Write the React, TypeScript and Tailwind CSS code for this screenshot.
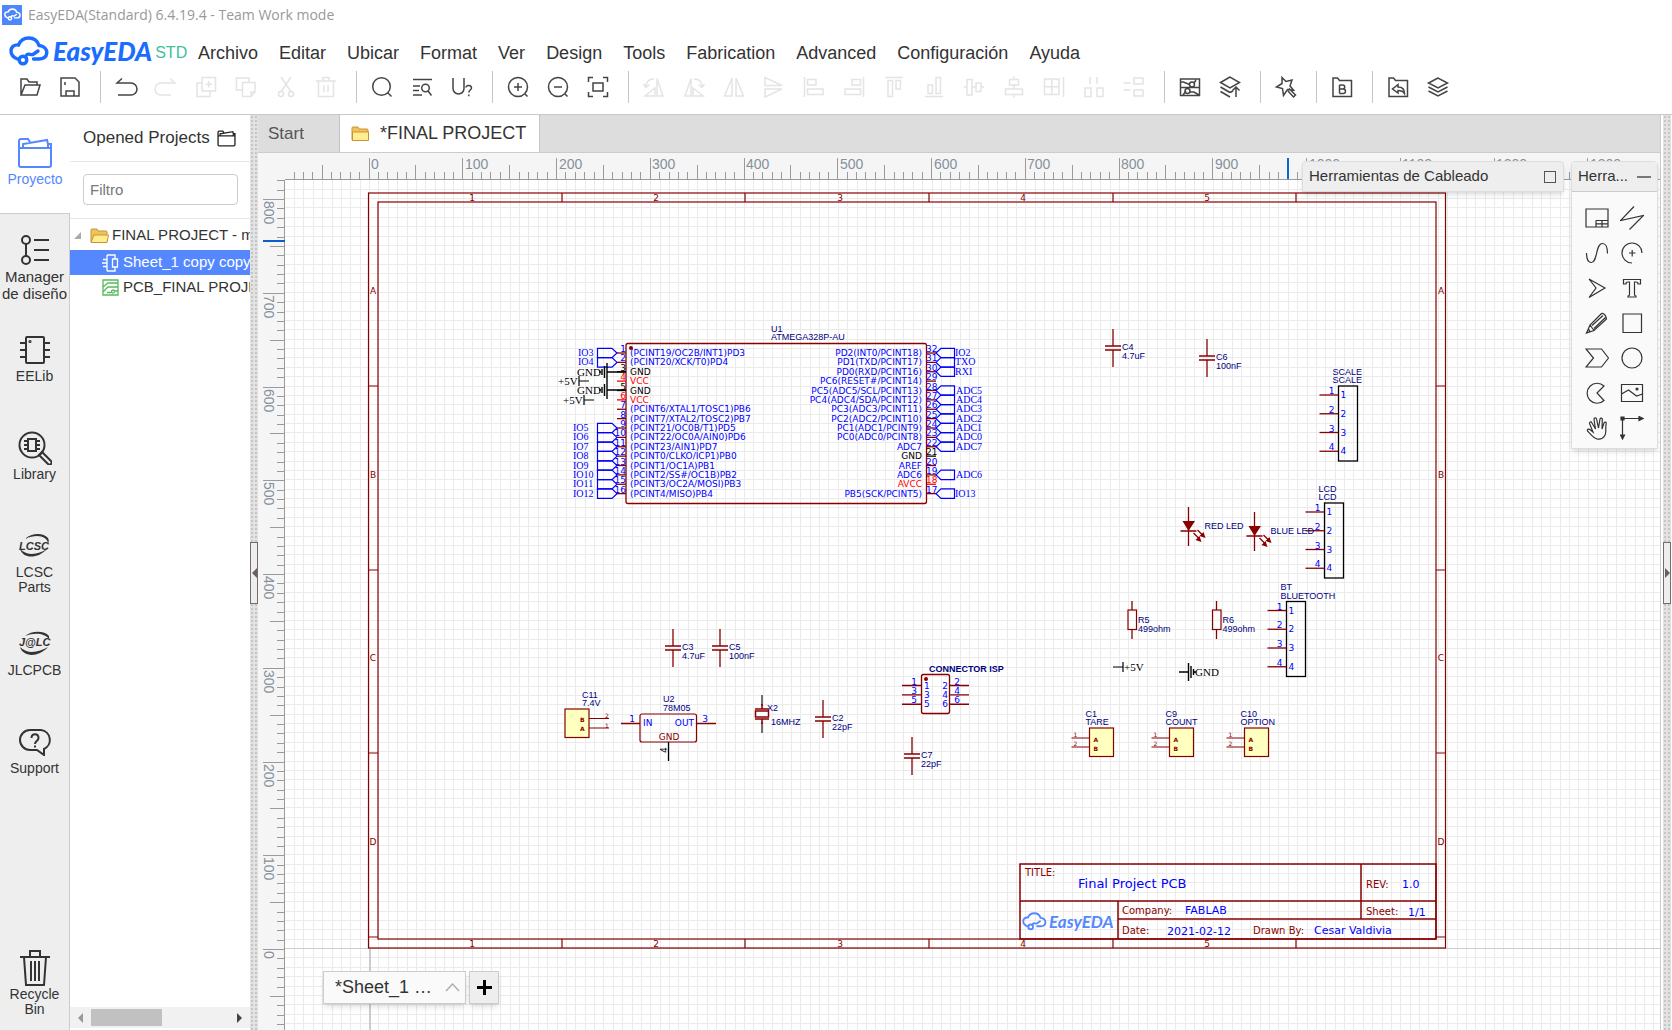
import { ReactNode } from 'react';

const MENUS = ['Archivo', 'Editar', 'Ubicar', 'Format', 'Ver', 'Design', 'Tools', 'Fabrication', 'Advanced', 'Configuración', 'Ayuda'];

const RED = '#880000';
const BLUE = '#0000ff';
const NAVY = '#000080';

// distance between two small grid lines, in pixels
const STEP = 9.375;

function Icon({ size = 24, width = 1.5, children }: { size?: number; width?: number; children: ReactNode }) {
  return (
    <svg
      width={size}
      height={size}
      viewBox="0 0 24 24"
      fill="none"
      stroke="currentColor"
      strokeWidth={width}
      className="shrink-0"
      aria-hidden="true"
    >
      {children}
    </svg>
  );
}

function Cloud({ className }: { className: string }) {
  return (
    <svg viewBox="0 0 40 30" fill="none" stroke="currentColor" strokeWidth="3.4" strokeLinecap="round" className={className} aria-hidden="true">
      <path d="M8.5 23C4.500 21.500 2 18.500 2 15C2 10.500 5.500 8.500 9.500 9C11.500 4 16 2 20 2C25 2 28.500 5 30 9.500C35 10 38 13 37.800 17C37.500 21 34 23 30 23H24.500" />
      <circle cx="14" cy="24" r="3.800" />
      <path d="M16.500 21C18.500 15.500 21 19.500 24 18.500L29 15" />
    </svg>
  );
}

type Tool = { label: string; off?: boolean; icon: ReactNode } | null;

const TOOLS: Tool[] = [
  { label: 'Open', icon: <path d="M3 20V4h6l2 3h8v3M3 20l4-10h15l-3 10z" /> },
  { label: 'Save', icon: <path d="M3 3h14l4 4v14H3zM7 7v3M8 21v-5h8v5" /> },
  null,
  { label: 'Undo', icon: <path d="M8 3.500L3 8h14a6 6 0 0 1 0 12H4" /> },
  { label: 'Redo', off: true, icon: <path d="M16 3.500L21 8H7a6 6 0 0 0 0 12h10" /> },
  { label: 'Add', off: true, icon: <path d="M8 2.500h13.500V16H8zM14.800 6v6.500M11.500 9.200H18M8 8H3v13.500h13V16" /> },
  { label: 'Copy', off: true, icon: <path d="M8 15H2.500V3H15v4M8.500 7.500H21V17l-4 4.500H8.500zM21 17h-4v4.500" /> },
  {
    label: 'Cut',
    off: true,
    icon: (
      <>
        <path d="M7 2l9.500 14M17 2L7.500 16" />
        <circle cx="7" cy="19" r="2.500" />
        <circle cx="17" cy="19" r="2.500" />
      </>
    ),
  },
  { label: 'Delete', off: true, icon: <path d="M2 6h20M9 6V2.500h6V6M4.500 6v15.500h15V6M10 10v7M14 10v7" /> },
  null,
  {
    label: 'Search',
    icon: (
      <>
        <circle cx="11.500" cy="11.500" r="8.800" />
        <path d="M17.500 17.500l4 4" />
      </>
    ),
  },
  {
    label: 'Find component',
    icon: (
      <>
        <path d="M3 4.500h19M3 11h7M3 15.500h6M3 20h9" />
        <circle cx="15.500" cy="13" r="3.800" />
        <path d="M18 16l3.500 4.500" />
      </>
    ),
  },
  {
    label: 'Annotate',
    icon: (
      <>
        <path d="M3 3v10.500a5.500 5.500 0 0 0 11 0V3" />
        <path d="M16 12.500c.500-3 5.500-2.500 5.500.500c0 2-2.700 2-2.700 4.500M18.800 19.500v1.800" />
      </>
    ),
  },
  null,
  {
    label: 'Zoom in',
    icon: (
      <>
        <circle cx="12" cy="12" r="9.500" />
        <path d="M12 8v8M8 12h8M19 19l2.500 2.500" />
      </>
    ),
  },
  {
    label: 'Zoom out',
    icon: (
      <>
        <circle cx="12" cy="12" r="9.500" />
        <path d="M8 12h8M19 19l2.500 2.500" />
      </>
    ),
  },
  { label: 'Fit window', icon: <path d="M2.500 7V2.500H7M17 2.500h4.500V7M21.500 17v4.500H17M7 21.500H2.500V17M7 8h10v8H7z" /> },
  null,
  { label: 'Rotate left', off: true, icon: <path d="M15 3.500V21h6zM13 13v8H3zM4 12C4 7 7 4 12 4M1.500 9L4 12.500L7.500 9.500" /> },
  { label: 'Rotate right', off: true, icon: <path d="M9 3.500V21H3zM11 13v8h10zM20 12C20 7 17 4 12 4M22.500 9L20 12.500L16.500 9.500" /> },
  { label: 'Flip horizontal', off: true, icon: <path d="M10 3v18H2.500zM14 3v18h7.500z" /> },
  { label: 'Flip vertical', off: true, icon: <path d="M3 10.500V2.500l17 8zM3 14v8l17-8z" /> },
  { label: 'Align left', off: true, icon: <path d="M2.500 2v20M5.500 4.500H14V10H5.500zM5.500 14H21v5.500H5.500z" /> },
  { label: 'Align right', off: true, icon: <path d="M21.500 2v20M10 4.500h8.500V10H10zM3 14h15.500v5.500H3z" /> },
  { label: 'Align top', off: true, icon: <path d="M3 2.500h18M6 5.500h4.500V21.500H6zM14 5.500h4.500V14H14z" /> },
  { label: 'Align bottom', off: true, icon: <path d="M3 21.500h18M6 10h4.500v8.500H6zM14 2.500h4.500v16H14z" /> },
  { label: 'Align middle', off: true, icon: <path d="M2 12h3M10 12h4M19 12h3M5 4.500h5v15.500H5zM14 8h5v8.500h-5z" /> },
  { label: 'Align center', off: true, icon: <path d="M12 1.500v3M12 10v4M12 19.500v3M7.500 4.500h9V10h-9zM3.500 14h17v5.500h-17z" /> },
  { label: 'Align grid', off: true, icon: <path d="M2.500 4h14.500v15.500H2.500zM9.800 4v15.500M2.500 11.800H17M21.500 2v20" /> },
  { label: 'Distribute horizontally', off: true, icon: <path d="M8 2v7M15 2v7M3 13h6v8.500H3zM15 13h6v8.500h-6z" /> },
  { label: 'Distribute vertically', off: true, icon: <path d="M1.500 8h7M1.500 15h7M12 3h9v6h-9zM12 15h9v6h-9z" /> },
  null,
  {
    label: 'Design manager',
    icon: (
      <>
        <path d="M2.500 4h19v16.500h-19zM2.500 7h3l6 2.500M16 8l2-3M8 16l-3 4M2.500 12.500h19M12 17h4l5 3" />
        <circle cx="14" cy="9.500" r="2.500" />
        <circle cx="9.500" cy="16" r="2.500" />
      </>
    ),
  },
  { label: 'Convert to PCB', icon: <path d="M12 2L2.500 7.500L12 13l9.500-5.500zM2.500 12l9.500 5.500M2.500 16.500l9.500 5.500M18 22V12.500M14.500 15.500l3.500-3.500l3.500 3.500M12 17.500l3-1.500" /> },
  null,
  { label: 'Wizard', icon: <path d="M8 2.500l4 4l6-1.500l-2 6l3.500 4l-6-.500l-4 6l-1-7l-6-1.500l5.500-3.500zM15 13.500l6.500 6.500l-2 2l-5.500-6" /> },
  null,
  { label: 'BOM', icon: <path d="M3 21.500V3h4.500l2 2.500h12v16zM9.500 10v8.500M9.500 10h3.200a2 2 0 0 1 0 4H9.500h3.700a2.200 2.200 0 0 1 0 4.500H9.500" /> },
  null,
  { label: 'Import', icon: <path d="M3 21.500V3h4.500l2 2.500h12v16zM12 9.500L6.500 14l5.500 4v-2.500c3 0 5 .500 6.500 3c0-4-2.500-6.500-6.500-6.500z" /> },
  { label: 'Layers', icon: <path d="M12 3L2.500 8L12 13l9.500-5zM2.500 12l9.500 5l9.500-5M2.500 16l9.500 5l9.500-5" /> },
];

function Header() {
  return (
    <header className="shrink-0 border-b border-[#c8c8c8] bg-white">
      <div className="flex h-[29px] items-center gap-[6px] pl-[2px]">
        <div className="flex h-5 w-5 items-center justify-center bg-[#4f86fb] text-white">
          <Cloud className="h-[13px] w-[17px]" />
        </div>
        <span className="font-['Open_Sans',sans-serif] text-[14px] text-[#999]">EasyEDA(Standard) 6.4.19.4 - Team Work mode</span>
      </div>
      <div className="flex h-[41px] items-center pt-[7px]">
        <a href="#home" className="flex w-[198px] shrink-0 items-center pl-[9px] text-[#1a6dff]">
          <Cloud className="mb-1 h-[30px] w-10" />
          <span className="mb-1 ml-1 font-['Lato',sans-serif] text-[26px] leading-7 font-black italic">EasyEDA</span>
          <span className="ml-[3px] text-[16px] text-[#3cc29b]">STD</span>
        </a>
        <nav className="flex gap-[21px] text-[18px] text-[#333]">
          {MENUS.map((m) => (
            <button key={m} type="button">
              {m}
            </button>
          ))}
        </nav>
      </div>
      <div className="mb-[10px] flex h-[34px] items-center pl-[10px]">
        {TOOLS.map((t, i) =>
          t ? (
            <button
              key={t.label}
              type="button"
              aria-label={t.label}
              disabled={t.off}
              className="flex w-10 shrink-0 justify-center text-[#444] disabled:text-[#e4e4e4]"
            >
              <Icon>{t.icon}</Icon>
            </button>
          ) : (
            <div key={i} className="flex w-4 shrink-0 justify-center self-stretch py-px pl-1">
              <div className="w-px bg-[#c4c4c4]" />
            </div>
          ),
        )}
      </div>
    </header>
  );
}

function RailItem({ label, icon, active, big }: { label: string; icon: ReactNode; active?: boolean; big?: boolean }) {
  return (
    <button
      type="button"
      className={`flex h-[98px] w-full shrink-0 flex-col items-center ${active ? 'bg-white text-[#5588ff]' : 'border-r border-[#ccc] text-[#333]'}`}
    >
      <span className={`flex h-9 items-center ${big ? 'mt-[18px]' : 'mt-5'}`}>{icon}</span>
      <span className={`w-[66px] ${big ? 'text-[15px] leading-[17px]' : 'mt-px text-[14px] leading-[15px]'}`}>{label}</span>
    </button>
  );
}

function Rail() {
  return (
    <aside className="flex w-[70px] shrink-0 flex-col bg-[#eee]">
      <RailItem
        active
        label="Proyecto"
        icon={
          <svg width="36" height="32" viewBox="0 0 36 32" fill="none" stroke="currentColor" strokeWidth="2" aria-hidden="true">
            <path d="M2 11v17a2 2 0 0 0 2 2h28a2 2 0 0 0 2-2V11zM2 11V4a2 2 0 0 1 2-2h7l2 3M6 11V7l24-4l1 4v4M31 7h3v4" />
          </svg>
        }
      />
      <div className="border-t border-r border-[#ccc]" />
      <RailItem
        big
        label="Manager de diseño"
        icon={
          <svg width="30" height="32" viewBox="0 0 30 32" fill="none" stroke="currentColor" strokeWidth="2" aria-hidden="true">
            <circle cx="6" cy="6" r="4" />
            <circle cx="6" cy="26" r="4" />
            <path d="M6 10v12M14 6h15M14 16h15M14 26h15" />
          </svg>
        }
      />
      <RailItem
        label="EELib"
        icon={
          <svg width="32" height="30" viewBox="0 0 32 30" fill="none" stroke="currentColor" strokeWidth="2" aria-hidden="true">
            <rect x="7" y="2" width="18" height="26" rx="1" />
            <path d="M1 8h6M1 15h6M1 22h6M25 8h6M25 15h6M25 22h6" />
            <circle cx="11" cy="6.500" r=".6" />
          </svg>
        }
      />
      <RailItem
        label="Library"
        icon={
          <svg width="34" height="34" viewBox="0 0 34 34" fill="none" stroke="currentColor" strokeWidth="2" aria-hidden="true">
            <circle cx="14" cy="14" r="12.500" />
            <path d="M10 8h8v12h-8zM6 10h4M6 14h4M6 18h4M18 10h4M18 14h4M18 18h4" />
            <path d="M21 24l3-3l9 9a2 2 0 0 1-3 3z" />
          </svg>
        }
      />
      <RailItem
        label="LCSC Parts"
        icon={
          <svg width="34" height="26" viewBox="0 0 34 26" fill="currentColor" aria-hidden="true">
            <path d="M7 6C13 0 25-1 30 5C31 7 31 9 30 10C29 4 20 0 7 6z" />
            <path d="M2 16C5 26 20 26 29 16C21 21 10 24 2 16z" />
            <text x="1" y="17" fontSize="11" fontStyle="italic" fontWeight="bold">LCSC</text>
          </svg>
        }
      />
      <RailItem
        label="JLCPCB"
        icon={
          <svg width="34" height="26" viewBox="0 0 34 26" fill="currentColor" aria-hidden="true">
            <path d="M7 5C13 0 26-1 31 5C31 6 31 7 31 8C27 3 18 1 7 5z" />
            <path d="M2 16C5 26 20 27 30 16C21 21 10 24 2 16z" />
            <text x="1" y="15" fontSize="11" fontStyle="italic" fontWeight="bold">J@LC</text>
          </svg>
        }
      />
      <RailItem
        label="Support"
        icon={
          <svg width="34" height="28" viewBox="0 0 34 28" fill="none" stroke="currentColor" strokeWidth="2" aria-hidden="true">
            <path d="M12 2h11a10 10 0 0 1 3 19v6l-7-5h-7a10 10 0 0 1 0-20z" />
            <path d="M13.500 10c0-5 7-5 7 0c0 3-3.500 3-3.500 6M17 17.500v2" />
          </svg>
        }
      />
      <div className="flex-1 border-r border-[#ccc]" />
      <button type="button" className="flex shrink-0 flex-col items-center border-r border-[#ccc] pb-[13px] text-[14px] leading-[15px] text-[#333]">
        <svg width="32" height="36" viewBox="0 0 32 36" fill="none" stroke="currentColor" strokeWidth="2" aria-hidden="true">
          <path d="M1 7h30M11 7V1h10v6M5 7l2 28h18l2-28M12 11v20M16 11v20M20 11v20" />
        </svg>
        <span className="mt-px w-[60px]">Recycle Bin</span>
      </button>
    </aside>
  );
}

function Folder({ open }: { open?: boolean }) {
  return (
    <svg width="19" height="17" viewBox="0 0 19 17" stroke="#c8913a" className="shrink-0" aria-hidden="true">
      <path d="M1 15V3q0-1 1-1h5l1 2h8q1 0 1 1v10z" fill="#f0c35a" />
      <path d={open ? 'M1 15.500L4 8h14.500L17 15.500z' : 'M1.500 7h16v8.500h-16z'} fill="#ffee90" />
    </svg>
  );
}

function ProjectPanel() {
  return (
    <section className="flex w-[180px] shrink-0 flex-col overflow-hidden bg-white text-[#333]">
      <div className="flex h-[47px] shrink-0 items-center gap-[7px] border-b border-[#e8e8e8] pl-[13px]">
        <h2 className="text-[17px] whitespace-nowrap">Opened Projects</h2>
        <svg width="19" height="17" viewBox="0 0 36 32" fill="none" stroke="#222" strokeWidth="2.500" aria-hidden="true">
          <path d="M2 11v17a2 2 0 0 0 2 2h28a2 2 0 0 0 2-2V11zM2 11V4a2 2 0 0 1 2-2h7l2 3M6 11V7l24-4l1 4v4M31 7h3v4" />
        </svg>
      </div>
      <div className="h-[57px] shrink-0 border-b border-[#e8e8e8] px-[13px] pt-3">
        <input
          type="text"
          aria-label="Filtro"
          placeholder="Filtro"
          className="h-[31px] w-[155px] rounded border border-[#ccc] px-[6px] text-[15px] placeholder:text-[#777]"
        />
      </div>
      <ul className="flex-1 overflow-hidden pt-1 text-[15px] whitespace-nowrap">
        <li>
          <button type="button" className="mb-[2px] flex h-[25px] items-center pl-[4px]">
            <svg width="8" height="8" viewBox="0 0 8 8" fill="#aaa" aria-hidden="true">
              <path d="M7 0v7H0z" />
            </svg>
            <span className="ml-2">
              <Folder open />
            </span>
            <span className="ml-[3px]">FINAL PROJECT - master</span>
          </button>
          <ul>
            <li className="bg-[#5588ff] text-white">
              <button type="button" className="flex h-[25px] items-center gap-1 pl-8">
                <svg width="17" height="18" viewBox="0 0 17 18" fill="none" stroke="currentColor" strokeWidth="1.300" aria-hidden="true">
                  <path d="M1 5.500h4M1 12.500h4M5 9H0M5 1v16M5 1h8v4M5 17h8v-4M10.500 5h5v8h-5z" />
                </svg>
                Sheet_1 copy copy
              </button>
            </li>
            <li>
              <button type="button" className="flex h-[25px] items-center gap-1 pl-8">
                <svg width="17" height="17" viewBox="0 0 17 17" fill="none" stroke="#55bb5a" strokeWidth="1.300" aria-hidden="true">
                  <path d="M1 1h15v15H1zM1 8L6 4h10M1 13l5-5h10M5 13.500h4.500M12.500 12H16" />
                  <circle cx="11" cy="12.500" r="1.500" />
                </svg>
                PCB_FINAL PROJECT
              </button>
            </li>
          </ul>
        </li>
      </ul>
      <div className="mb-[2px] flex h-[21px] shrink-0 items-center bg-[#f1f1f1]">
        <svg width="21" height="10" viewBox="0 0 21 10" fill="#999" aria-hidden="true">
          <path d="M8 5l5-5v10z" />
        </svg>
        <div className="h-[17px] w-[71px] bg-[#c1c1c1]" />
        <svg width="10" height="10" viewBox="0 0 10 10" fill="#444" className="mr-[6px] ml-auto" aria-hidden="true">
          <path d="M8 5L3 0v10z" />
        </svg>
      </div>
    </section>
  );
}

function Splitter({ right }: { right?: boolean }) {
  return (
    <div className="flex w-2 shrink-0 flex-col bg-[#e2e2e2] bg-[radial-gradient(#c6c6c6_1px,transparent_1px)] bg-size-[4px_4px] pt-[427px]">
      <button
        type="button"
        aria-label={right ? 'Show right panel' : 'Hide left panel'}
        className="flex h-[62px] w-2 items-center justify-center border border-[#756b6b] bg-[#eee]"
      >
        <svg width="5" height="10" viewBox="0 0 5 10" fill="#6b6060" aria-hidden="true">
          <path d={right ? 'M0 0l5 5l-5 5z' : 'M5 0L0 5l5 5z'} />
        </svg>
      </button>
    </div>
  );
}

function range(from: number, to: number) {
  return Array.from({ length: to - from + 1 }, (_, i) => from + i);
}

function tickLength(k: number) {
  if (k % 10 === 0) return 21;
  return k % 5 === 0 ? 14 : 7;
}

function TopRuler() {
  return (
    <svg className="block h-[27px] w-full shrink-0 bg-[#f5f5f5]" aria-hidden="true">
      <g stroke="#9a9a9a" shapeRendering="crispEdges">
        <path d="M27 26.500H4000" />
        {range(-8, 300).map((k) => {
          const x = Math.round(110.5 + k * STEP) + 0.5;
          return <path key={k} d={`M${x} 26V${26 - tickLength(k)}`} />;
        })}
        <path d="M1030 5V26" stroke="#0a68cc" strokeWidth="2" />
      </g>
      <g fill="#86909c" fontSize="14">
        {range(0, 20).map((n) => (
          <text key={n} x={Math.round(113 + n * STEP * 10)} y="16">
            {n * 100}
          </text>
        ))}
      </g>
    </svg>
  );
}

function SideRuler() {
  return (
    <svg className="block h-full w-[27px] shrink-0 bg-[#f5f5f5]" aria-hidden="true">
      <g stroke="#9a9a9a" shapeRendering="crispEdges">
        <path d="M26.500 0V3000" />
        {range(-80, 82).map((k) => {
          const y = Math.round(769 - k * STEP) + 0.5;
          return <path key={k} d={`M26 ${y}H${26 - tickLength(k)}`} />;
        })}
        <path d="M5 61H27" stroke="#0a5fcc" strokeWidth="2" />
      </g>
      <g fill="#86909c" fontSize="14">
        {range(0, 8).map((n) => (
          <text key={n} transform={`translate(6 ${Math.round(771 - n * STEP * 10)}) rotate(90)`}>
            {n * 100}
          </text>
        ))}
      </g>
    </svg>
  );
}

function Grid() {
  const cols = range(-8, 300).map((k) => `M${Math.round(84 + k * STEP) + 0.5} 0V3000`);
  const rows = range(-200, 81).map((k) => `M0 ${Math.round(768 - k * STEP) + 0.5}H4000`);
  return (
    <g shapeRendering="crispEdges">
      <path d={cols.concat(rows).join('')} stroke="#ebebeb" />
      <path d="M0 768.500H4000" stroke="#ccc" />
      <path d="M84.500 768V3000" stroke="#ccc" strokeWidth="2" />
    </g>
  );
}

const SANS = 'Liberation Sans, Arial, sans-serif';
const WIDE = 'DejaVu Sans, Verdana, sans-serif';
const SERIF = 'Liberation Serif, serif';

type LabelProps = {
  x: number;
  y: number;
  size?: number;
  fill?: string;
  font?: string;
  anchor?: 'start' | 'middle' | 'end';
  bold?: boolean;
  children: ReactNode;
};

function Label({ x, y, size = 9, fill = NAVY, font = SANS, anchor = 'start', bold, children }: LabelProps) {
  return (
    <text x={x} y={y} fontSize={size} fill={fill} fontFamily={font} textAnchor={anchor} fontWeight={bold ? 700 : 400}>
      {children}
    </text>
  );
}

function Frame() {
  const cols = [562, 745, 929, 1113, 1296];
  const rows = [386, 570, 753, 937];
  return (
    <g>
      <g fill="none" stroke={RED} strokeWidth="1.200">
        <rect x="368.500" y="193" width="1077" height="755" />
        <rect x="378" y="202" width="1058" height="737" />
        {cols.map((x) => (
          <path key={x} d={`M${x} 193v9M${x} 939v9`} />
        ))}
        {rows.map((y) => (
          <path key={y} d={`M369 ${y}h9M1436 ${y}h9`} />
        ))}
      </g>
      {[472, 656, 840, 1023, 1207].map((x, i) => (
        <g key={x}>
          <Label x={x} y={201} font={WIDE} fill={RED} anchor="middle">{i + 1}</Label>
          <Label x={x} y={947} font={WIDE} fill={RED} anchor="middle">{i + 1}</Label>
        </g>
      ))}
      {[294, 478, 661, 845].map((y, i) => (
        <g key={y}>
          <Label x={373} y={y} font={WIDE} fill={RED} anchor="middle">{'ABCD'[i]}</Label>
          <Label x={1441} y={y} font={WIDE} fill={RED} anchor="middle">{'ABCD'[i]}</Label>
        </g>
      ))}
    </g>
  );
}

function TitleBlock() {
  return (
    <g>
      <path
        d="M1020 864H1436V939H1020zM1020 901H1436M1118 901V939M1118 919H1436M1361 864V919"
        fill="none"
        stroke={RED}
        strokeWidth="1.500"
      />
      <Label x={1025} y={876} size={10} font={WIDE} fill={RED}>TITLE:</Label>
      <Label x={1078} y={888} size={13} font={WIDE} fill={BLUE}>Final Project PCB</Label>
      <Label x={1366} y={888} size={10} font={WIDE} fill={RED}>REV:</Label>
      <Label x={1402} y={888} size={11} font={WIDE} fill={BLUE}>1.0</Label>
      <Label x={1122} y={914} size={10} font={WIDE} fill={RED}>Company:</Label>
      <Label x={1185} y={914} size={11} font={WIDE} fill={BLUE}>FABLAB</Label>
      <Label x={1366} y={915} size={10} font={WIDE} fill={RED}>Sheet:</Label>
      <Label x={1408} y={916} size={11} font={WIDE} fill={BLUE}>1/1</Label>
      <Label x={1122} y={934} size={10} font={WIDE} fill={RED}>Date:</Label>
      <Label x={1167} y={935} size={11} font={WIDE} fill={BLUE}>2021-02-12</Label>
      <Label x={1253} y={934} size={10} font={WIDE} fill={RED}>Drawn By:</Label>
      <Label x={1314} y={934} size={11} font={WIDE} fill={BLUE}>Cesar Valdivia</Label>
      <g transform="translate(1022 912) scale(.62)" fill="none" stroke="#5588ff" strokeWidth="3" strokeLinecap="round">
        <path d="M8.500 23C4.500 21.500 2 18.500 2 15C2 10.500 5.500 8.500 9.500 9C11.500 4 16 2 20 2C25 2 28.500 5 30 9.500C35 10 38 13 37.800 17C37.500 21 34 23 30 23H24.500" />
        <circle cx="14" cy="24" r="3.800" />
        <path d="M16.500 21C18.500 15.500 21 19.500 24 18.500L29 15" />
      </g>
      <text x="1049" y="928" fontSize="17" fontFamily="Lato, sans-serif" fontWeight="700" fontStyle="italic" fill="#5588ff">
        EasyEDA
      </text>
    </g>
  );
}

const LEFT_PINS = [
  '(PCINT19/OC2B/INT1)PD3', '(PCINT20/XCK/T0)PD4', 'GND', 'VCC', 'GND', 'VCC', '(PCINT6/XTAL1/TOSC1)PB6', '(PCINT7/XTAL2/TOSC2)PB7',
  '(PCINT21/OC0B/T1)PD5', '(PCINT22/OC0A/AIN0)PD6', '(PCINT23/AIN1)PD7', '(PCINT0/CLKO/ICP1)PB0', '(PCINT1/OC1A)PB1',
  '(PCINT2/SS#/OC1B)PB2', '(PCINT3/OC2A/MOSI)PB3', '(PCINT4/MISO)PB4',
];
const LEFT_NETS = ['IO3', 'IO4', '', '', '', '', '', '', 'IO5', 'IO6', 'IO7', 'IO8', 'IO9', 'IO10', 'IO11', 'IO12'];
const RIGHT_PINS = [
  'PD2(INT0/PCINT18)', 'PD1(TXD/PCINT17)', 'PD0(RXD/PCINT16)', 'PC6(RESET#/PCINT14)', 'PC5(ADC5/SCL/PCINT13)', 'PC4(ADC4/SDA/PCINT12)',
  'PC3(ADC3/PCINT11)', 'PC2(ADC2/PCINT10)', 'PC1(ADC1/PCINT9)', 'PC0(ADC0/PCINT8)', 'ADC7', 'GND', 'AREF', 'ADC6', 'AVCC', 'PB5(SCK/PCINT5)',
];
const RIGHT_NETS = ['IO2', 'TXO', 'RXI', '', 'ADC5', 'ADC4', 'ADC3', 'ADC2', 'ADC1', 'ADC0', 'ADC7', '', '', 'ADC6', '', 'IO13'];

function pinColors(name: string) {
  if (name === 'GND') return ['#000', '#000'];
  if (name.endsWith('VCC')) return ['#ff0000', '#ff0000'];
  return [BLUE, RED];
}

function Atmega() {
  return (
    <g>
      <Label x={771} y={332}>U1</Label>
      <Label x={771} y={340}>ATMEGA328P-AU</Label>
      <rect x="626" y="343.500" width="300.500" height="160" rx="2" fill="none" stroke={RED} strokeWidth="1.300" />
      <circle cx="631" cy="348" r="2" fill={RED} />
      {LEFT_PINS.map((name, i) => {
        const y = 353 + i * STEP;
        const [text, line] = pinColors(name);
        const net = LEFT_NETS[i];
        return (
          <g key={i}>
            <path d={`M617 ${y}h9`} stroke={line} strokeWidth="1.300" />
            <Label x={626} y={y - 1} font={WIDE} fill={text} anchor="end">{i + 1}</Label>
            <Label x={630} y={y + 3} font={WIDE} fill={text}>{name}</Label>
            {net && (
              <>
                <path d={`M597.500 ${y - 4.7}H612L617 ${y}L612 ${y + 4.7}H597.500z`} fill="none" stroke={BLUE} strokeWidth="1.200" />
                <Label x={i < 2 ? 578 : 573} y={y + 3} size={10} font={SERIF} fill={BLUE}>{net}</Label>
              </>
            )}
          </g>
        );
      })}
      {RIGHT_PINS.map((name, i) => {
        const y = 353 + i * STEP;
        const [text, line] = pinColors(name);
        const net = RIGHT_NETS[i];
        return (
          <g key={i}>
            <path d={`M927 ${y}h9`} stroke={line} strokeWidth="1.300" />
            <Label x={926} y={y - 1} font={WIDE} fill={text}>{32 - i}</Label>
            <Label x={922} y={y + 3} font={WIDE} fill={text} anchor="end">{name}</Label>
            {net && (
              <>
                <path d={`M954.500 ${y - 4.7}H941L936 ${y}L941 ${y + 4.7}H954.500z`} fill="none" stroke={BLUE} strokeWidth="1.200" />
                <Label x={net.startsWith('ADC') ? 956 : 955} y={y + 3} size={10} font={SERIF} fill={BLUE}>{net}</Label>
              </>
            )}
          </g>
        );
      })}
      {[372, 390].map((y) => (
        <g key={y}>
          <path d={`M626 ${y}H607M607 ${y - 9}v18M604.500 ${y - 6}v12M602 ${y - 3}v6M600 ${y - 1}v2`} stroke="#000" strokeWidth="1.400" />
          <Label x={577} y={y + 4} size={11} font={SERIF} fill="#000">GND</Label>
        </g>
      ))}
      {[[579, 381], [584, 400]].map(([x, y]) => (
        <g key={x}>
          <path d={`M${x} ${y}h10M${x} ${y - 5}v10`} stroke="#000" strokeWidth="1.200" />
          <Label x={x - 21} y={y + 4} size={11} font={SERIF} fill="#000">+5V</Label>
        </g>
      ))}
    </g>
  );
}

function Capacitor({ x, y, name, value }: { x: number; y: number; name: string; value: string }) {
  return (
    <g>
      <path d={`M${x} ${y - 19}V${y - 2}M${x} ${y + 2}V${y + 19}M${x - 8} ${y - 2}h16M${x - 8} ${y + 2}h16`} stroke={RED} strokeWidth="1.300" />
      <Label x={x + 9} y={y + 2}>{name}</Label>
      <Label x={x + 9} y={y + 11}>{value}</Label>
    </g>
  );
}

function Header4({ x, y, name, value, gap = 8 }: { x: number; y: number; name: string; value: string; gap?: number }) {
  return (
    <g>
      <Label x={x - 6} y={y - 3 - gap}>{name}</Label>
      <Label x={x - 6} y={y - 3}>{value}</Label>
      <rect x={x} y={y} width="19" height="75" fill="none" stroke="#000" strokeWidth="1.300" />
      {[1, 2, 3, 4].map((n) => {
        const py = y + 9 + (n - 1) * STEP * 2;
        return (
          <g key={n}>
            <path d={`M${x - 19} ${py}h19`} stroke={RED} strokeWidth="1.300" />
            <Label x={x - 7} y={py - 1} font={WIDE} fill={BLUE} anchor="middle">{n}</Label>
            <Label x={x + 2} y={py + 3} font={WIDE} fill={BLUE}>{n}</Label>
          </g>
        );
      })}
    </g>
  );
}

function Led({ x, y, name }: { x: number; y: number; name: string }) {
  return (
    <g>
      <path
        d={`M${x} ${y - 19}v39M${x - 8} ${y + 5}h16M${x + 5} ${y + 7}l6 6M${x + 9} ${y + 4}l6 6`}
        stroke={RED}
        strokeWidth="1.300"
      />
      <path
        d={`M${x - 6} ${y - 5}h12.500L${x} ${y + 5}zM${x + 13} ${y + 16}l-6-2l4-4zM${x + 17} ${y + 12}l-6-2l4-4z`}
        fill={RED}
      />
      <Label x={x + 16} y={y + 3}>{name}</Label>
    </g>
  );
}

function Resistor({ x, y, name, value }: { x: number; y: number; name: string; value: string }) {
  return (
    <g>
      <rect x={x - 4} y={y - 10} width="8.500" height="19.500" fill="none" stroke={RED} strokeWidth="1.200" />
      <path d={`M${x} ${y - 19}v9M${x} ${y + 10}v9`} stroke={RED} strokeWidth="1.300" />
      <Label x={x + 6} y={y + 3}>{name}</Label>
      <Label x={x + 6} y={y + 12}>{value}</Label>
    </g>
  );
}

function Terminal({ x, y, name, value }: { x: number; y: number; name: string; value: string }) {
  return (
    <g>
      <Label x={x - 4} y={y - 11}>{name}</Label>
      <Label x={x - 4} y={y - 3}>{value}</Label>
      <rect x={x} y={y} width="24" height="28.500" fill="#ffffc0" stroke={RED} strokeWidth="1.200" />
      <path d={`M${x - 18} ${y + 10}h18M${x - 18} ${y + 19}h18`} stroke={RED} strokeWidth="1.200" />
      <Label x={x - 16} y={y + 9} size={6} font={WIDE} fill={RED}>1</Label>
      <Label x={x - 16} y={y + 18} size={6} font={WIDE} fill={RED}>2</Label>
      <Label x={x + 4} y={y + 14} size={6} font={WIDE} fill={RED} bold>A</Label>
      <Label x={x + 4} y={y + 23} size={6} font={WIDE} fill={RED} bold>B</Label>
    </g>
  );
}

function PowerParts() {
  return (
    <g>
      {/* battery input */}
      <Label x={582} y={698}>C11</Label>
      <Label x={582} y={706}>7.4V</Label>
      <rect x="565" y="709" width="24" height="28.500" fill="#ffffc0" stroke={RED} strokeWidth="1.200" />
      <path d="M589 718.500h20M589 728h20" stroke={RED} strokeWidth="1.200" />
      <Label x={605} y={718} size={6} font={WIDE} fill={RED}>2</Label>
      <Label x={605} y={728} size={6} font={WIDE} fill={RED}>1</Label>
      <Label x={580} y={722} size={6} font={WIDE} fill={RED} bold>B</Label>
      <Label x={580} y={731} size={6} font={WIDE} fill={RED} bold>A</Label>

      {/* regulator */}
      <Label x={663} y={702}>U2</Label>
      <Label x={663} y={711}>78M05</Label>
      <rect x="640" y="714" width="56.500" height="28" rx="2" fill="none" stroke={RED} strokeWidth="1.200" />
      <path d="M621 723.500h19M697 723.500h19" stroke={RED} strokeWidth="1.300" />
      <path d="M668.500 742v19" stroke="#000" strokeWidth="1.300" />
      <Label x={632} y={722} font={WIDE} fill={BLUE} anchor="middle">1</Label>
      <Label x={705} y={722} font={WIDE} fill={BLUE} anchor="middle">3</Label>
      <Label x={643} y={726} font={WIDE} fill={BLUE}>IN</Label>
      <Label x={694} y={726} font={WIDE} fill={BLUE} anchor="end">OUT</Label>
      <Label x={669} y={740} font={WIDE} fill={RED} anchor="middle">GND</Label>
      <text transform="translate(667 753) rotate(-90)" fontSize="9" fontFamily={WIDE}>4</text>

      {/* crystal */}
      <path d="M762 695v11M762 722v11" stroke="#444" strokeWidth="1.500" />
      <path d="M762 704v5M762 719v5M755 709h14M755 719h14" stroke={RED} strokeWidth="1.500" />
      <rect x="755.500" y="711" width="13" height="6" fill="#fff" stroke={RED} strokeWidth="1.500" />
      <Label x={767} y={711}>X2</Label>
      <Label x={771} y={725}>16MHZ</Label>

      {/* loose power flags */}
      <path d="M1113 667h10M1123 662v10" stroke="#000" strokeWidth="1.200" />
      <Label x={1124} y={671} size={11} font={SERIF} fill="#000">+5V</Label>
      <path d="M1179 672h9M1188.500 663v18M1191 666v12M1193.500 669v6M1195 671v2" stroke="#000" strokeWidth="1.400" />
      <Label x={1195} y={676} size={11} font={SERIF} fill="#000">GND</Label>
    </g>
  );
}

function IspHeader() {
  return (
    <g>
      <Label x={929} y={672} bold>CONNECTOR ISP</Label>
      <rect x="921.500" y="674.500" width="28" height="39" rx="2" fill="none" stroke={RED} strokeWidth="1.300" />
      <circle cx="926" cy="679" r="2" fill={RED} />
      {[0, 1, 2].map((i) => {
        const y = 685.5 + i * STEP;
        return (
          <g key={i}>
            <path d={`M902 ${y}h19M950 ${y}h19`} stroke={RED} strokeWidth="1.300" />
            <Label x={914} y={y - 1} font={WIDE} fill={BLUE} anchor="middle">{i * 2 + 1}</Label>
            <Label x={924} y={y + 3} font={WIDE} fill={BLUE}>{i * 2 + 1}</Label>
            <Label x={948} y={y + 3} font={WIDE} fill={BLUE} anchor="end">{i * 2 + 2}</Label>
            <Label x={957} y={y - 1} font={WIDE} fill={BLUE} anchor="middle">{i * 2 + 2}</Label>
          </g>
        );
      })}
    </g>
  );
}

function Schematic() {
  return (
    <svg className="block h-full w-full bg-white" role="img" aria-label="Schematic sheet">
      <Grid />
      <g transform="translate(-285 -180)">
        <Frame />
        <TitleBlock />
        <Atmega />
        <Capacitor x={1113} y={348} name="C4" value="4.7uF" />
        <Capacitor x={1207} y={358} name="C6" value="100nF" />
        <Capacitor x={673} y={648} name="C3" value="4.7uF" />
        <Capacitor x={720} y={648} name="C5" value="100nF" />
        <Capacitor x={823} y={719} name="C2" value="22pF" />
        <Capacitor x={912} y={756} name="C7" value="22pF" />
        <Header4 x={1338.5} y={386} name="SCALE" value="SCALE" />
        <Header4 x={1324.5} y={503} name="LCD" value="LCD" />
        <Header4 x={1286.5} y={601.5} name="BT" value="BLUETOOTH" gap={9} />
        <Led x={1188.5} y={526} name="RED LED" />
        <Led x={1254.5} y={531} name="BLUE LED" />
        <Resistor x={1132} y={620} name="R5" value="499ohm" />
        <Resistor x={1216.5} y={620} name="R6" value="499ohm" />
        <Terminal x={1089.5} y={728} name="C1" value="TARE" />
        <Terminal x={1169.5} y={728} name="C9" value="COUNT" />
        <Terminal x={1244.5} y={728} name="C10" value="OPTION" />
        <PowerParts />
        <IspHeader />
      </g>
    </svg>
  );
}

const DRAW_TOOLS: { label: string; icon: ReactNode }[] = [
  { label: 'Frame', icon: <path d="M1 3h22v18H1zM11 14.500h12M11 14.500V21M11 17.800h12M17 14.500V21" /> },
  { label: 'Line', icon: <path d="M14 .500L.500 14.500L23.500 9.500L9.500 23.500" /> },
  { label: 'Bezier', icon: <path d="M1.500 12c0 5 1.500 9.500 4.800 9.500c6.500 0 4-19 11.200-19c3 0 5 4 5 10" /> },
  { label: 'Arc', icon: <path d="M22 12A10 10 0 1 0 12 22M9 12h6.500M12.200 9v6.500" /> },
  { label: 'Arrow', icon: <path d="M4 3l16 9L4 21.500L11 12z" /> },
  { label: 'Text', icon: <path d="M3.500 3.500h17V8H18c0-1.500-.5-2-2-2h-1.500v12.500c0 1 .500 1.500 1.500 1.500v1H8v-1c1 0 1.500-.500 1.500-1.500V6H8C6.500 6 6 6.500 6 8H3.500z" /> },
  { label: 'Pencil', icon: <path d="M1.500 22L5 14L16 3q1.500-1.500 3.500.5T21.500 8L9 19.500zM5 14l4 5.500M7 14.500L18 4.500M9 17.500L20.500 6.500M1.500 22l2-4l1.500 2.500z" /> },
  { label: 'Rectangle', icon: <path d="M3 3h18.500v18.500H3z" /> },
  { label: 'Polygon', icon: <path d="M1 3h15.500l7 9l-7 9H1l7.500-9z" /> },
  { label: 'Ellipse', icon: <circle cx="12" cy="12" r="10" /> },
  { label: 'Pie', icon: <path d="M19 5A10 10 0 1 0 19 19.500L12 12z" /> },
  {
    label: 'Image',
    icon: (
      <>
        <path d="M1.500 3.500h21v17h-21zM1.500 13l7-4l8 6l6-2" />
        <circle cx="17" cy="8" r="1" fill="currentColor" />
      </>
    ),
  },
  {
    label: 'Drag',
    icon: (
      <path d="M12 23C8 22 6 18.500 2.500 15c-.5-2 1.500-2.500 3-1L8 16L4.500 7.500c0-2 2-2 2.500-.5l3.500 6L9 3.500c0-2 2.300-2 2.600-.3L13.500 12L15 3c.5-1.500 2.500-1.200 2.300.5L17 13l2-6c.7-1.500 2.500-1 2.200.700C20 13 22 17 19.500 20C18 22.500 15 23.500 12 23z" />
    ),
  },
  {
    label: 'Origin',
    icon: (
      <>
        <path d="M2.500 21V2.500H21" />
        <path d="M19 .500l4 2l-4 2zM.500 19l2 4l2-4zM1 1h3v3H1z" fill="currentColor" />
      </>
    ),
  },
];

function FloatingPanels() {
  return (
    <>
      <section className="absolute top-2 right-24 flex h-[31px] w-[262px] items-center justify-between rounded-t border border-[#ddd] bg-[#eee] pr-[7px] pl-[6px] text-[#333] shadow-md">
        <h3 className="text-[15px]">Herramientas de Cableado</h3>
        <button type="button" aria-label="Expand" className="h-3 w-3 border border-[#555]" />
      </section>
      <section className="absolute top-2 right-[2px] w-[87px] rounded-t border border-[#ddd] bg-[#fafafa] text-[#333] shadow-md">
        <div className="flex h-[30px] items-center justify-between border-b border-[#ccc] bg-[#eee] pr-[6px] pl-[6px]">
          <h3 className="text-[15px]">Herra...</h3>
          <button type="button" aria-label="Collapse" className="h-[2px] w-[14px] bg-[#777]" />
        </div>
        <div className="grid grid-cols-2 px-[7px] pt-2 pb-[3px]">
          {DRAW_TOOLS.map((t) => (
            <button key={t.label} type="button" aria-label={t.label} className="flex h-[35px] items-center justify-center">
              <Icon width={1.2}>{t.icon}</Icon>
            </button>
          ))}
        </div>
      </section>
      <div className="absolute bottom-[26px] left-[65px] flex gap-[3px]">
        <button type="button" className="flex h-[33px] w-[143px] items-center justify-between border border-[#ccc] bg-[#fafafa] pr-[5px] pl-[11px] text-[18px] text-[#333] shadow-md">
          *Sheet_1 …
          <svg width="15" height="9" viewBox="0 0 15 9" fill="none" stroke="#aaa" strokeWidth="1.300" aria-hidden="true">
            <path d="M1 8l6.500-7L14 8" />
          </svg>
        </button>
        <button type="button" aria-label="New sheet" className="flex h-[33px] w-[30px] items-center justify-center border border-[#ccc] bg-[#eee] shadow-md">
          <svg width="15" height="15" viewBox="0 0 15 15" stroke="#000" strokeWidth="3" aria-hidden="true">
            <path d="M7.500 0v15M0 7.500h15" />
          </svg>
        </button>
      </div>
    </>
  );
}

function Workspace() {
  return (
    <main className="flex min-w-0 flex-1 flex-col border-r border-[#ccc]">
      <div className="flex h-[38px] shrink-0 border-b border-[#ccc] bg-[#ddd] text-[18px]">
        <button type="button" className="w-[81px] pl-[10px] text-left text-[17px] text-[#555]">
          Start
        </button>
        <button type="button" className="flex w-[201px] items-center gap-[10px] border-x border-[#c4c4c4] bg-white pl-[11px] whitespace-nowrap text-[#333]">
          <Folder />
          *FINAL PROJECT
        </button>
      </div>
      <div className="relative flex min-h-0 flex-1 flex-col">
        <TopRuler />
        <div className="flex min-h-0 flex-1">
          <SideRuler />
          <div className="min-w-0 flex-1">
            <Schematic />
          </div>
        </div>
        <FloatingPanels />
      </div>
    </main>
  );
}

export default function App() {
  return (
    <div className="flex h-screen flex-col overflow-hidden bg-white font-['Liberation_Sans',Arial,sans-serif]">
      <Header />
      <div className="flex min-h-0 flex-1">
        <Rail />
        <ProjectPanel />
        <Splitter />
        <Workspace />
        <div className="mr-px ml-[2px] flex">
          <Splitter right />
        </div>
      </div>
    </div>
  );
}
